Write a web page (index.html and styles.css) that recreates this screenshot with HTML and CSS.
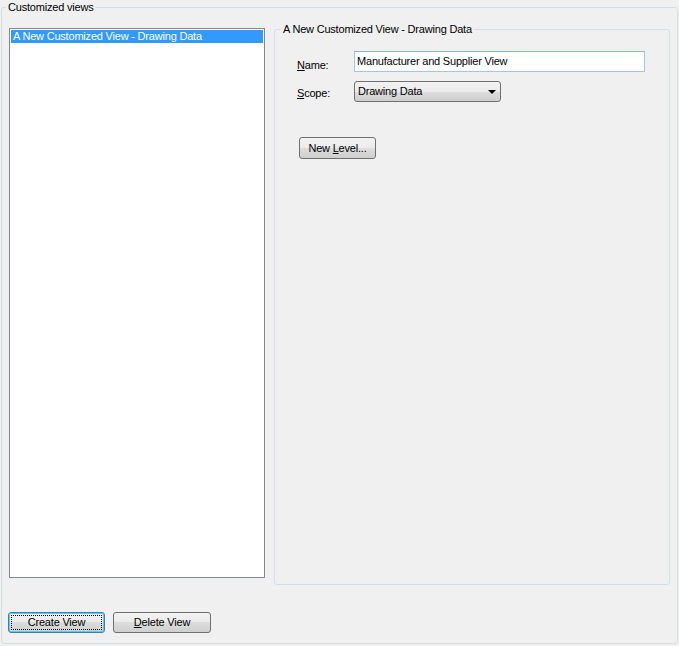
FILE: index.html
```html
<!DOCTYPE html>
<html>
<head>
<meta charset="utf-8">
<link rel="stylesheet" href="styles.css">
</head>
<body>
<fieldset class="outer">
  <legend class="outer-title">Customized views</legend>
  <div class="main">
    <div class="listbox">
      <div class="item selected">A New Customized View - Drawing Data</div>
    </div>
    <fieldset class="detail">
      <legend class="detail-title">A New Customized View - Drawing Data</legend>
      <div class="detail-body">
        <div class="field-row">
          <label class="field-label name-label"><span class="ak">N</span>ame:</label>
          <div class="textbox">Manufacturer and Supplier View</div>
        </div>
        <div class="field-row scope-row">
          <label class="field-label scope-label"><span class="ak">S</span>cope:</label>
          <div class="combo"><span class="combo-text">Drawing Data</span><span class="arrow"></span></div>
        </div>
        <button class="btn new-level">New <span class="ak">L</span>evel...</button>
      </div>
    </fieldset>
  </div>
  <div class="actions">
    <button class="btn create focused">Create View</button>
    <button class="btn delete"><span class="ak">D</span>elete View</button>
  </div>
</fieldset>
</body>
</html>
```

FILE: styles.css
```css
html, body {
  margin: 0;
  background: #f0f0f0;
}
body {
  width: 679px;
  height: 646px;
  overflow: hidden;
  font-family: "Liberation Sans", Arial, sans-serif;
  font-size: 11px;
  line-height: 13px;
  letter-spacing: -0.2px;
  color: #000;
}
.ak {
  text-decoration: underline;
}
.outer {
  margin: 0 0 0 1px;
  width: 677px;
  box-sizing: border-box;
  border: 1px solid #d5dfe5;
  border-radius: 3px;
  padding: 0;
  min-inline-size: 0;
}
.outer-title {
  margin-left: 4px;
  padding: 0 2px;
  line-height: 14px;
}
.main {
  display: flex;
  align-items: flex-start;
  gap: 9px;
  padding: 8px 7px 0 7px;
}
.listbox {
  width: 256px;
  height: 550px;
  box-sizing: border-box;
  margin-top: 6px;
  border: 1px solid #828790;
  background: #fff;
  padding: 1px;
}
.item {
  height: 13px;
  line-height: 13px;
  padding-left: 2px;
  white-space: nowrap;
}
.item.selected {
  background: #3399ff;
  color: #fff;
}
.detail {
  flex: 1;
  margin: 0;
  padding: 0;
  min-inline-size: 0;
  height: 563px;
  box-sizing: border-box;
  border: 1px solid #d5dfe5;
  border-radius: 3px;
}
.detail-title {
  margin-left: 6px;
  padding: 0 2px;
  line-height: 14px;
}
.detail-body {
  padding: 15px 24px 0 22px;
}
.field-row {
  display: flex;
  align-items: flex-start;
}
.field-label {
  width: 57px;
  flex: none;
}
.name-label {
  padding-top: 8px;
}
.scope-label {
  padding-top: 6px;
}
.textbox {
  flex: 1;
  height: 21px;
  box-sizing: border-box;
  border: 1px solid #a5c4e4;
  border-top-color: #8fb3dc;
  background: #fff;
  padding: 3px 0 0 2px;
  white-space: nowrap;
}
.scope-row {
  margin-top: 9px;
}
.combo {
  width: 147px;
  height: 21px;
  box-sizing: border-box;
  border: 1px solid #707070;
  border-radius: 3px;
  background: linear-gradient(#f2f2f2, #ebebeb 50%, #dddddd 50%, #cfcfcf);
  display: flex;
  align-items: center;
  justify-content: space-between;
  padding: 0 4px 0 3px;
}
.arrow {
  width: 0;
  height: 0;
  border-left: 4px solid transparent;
  border-right: 4px solid transparent;
  border-top: 4px solid #000;
}
.btn {
  font-family: inherit;
  font-size: 11px;
  line-height: 13px;
  letter-spacing: -0.2px;
  height: 21px;
  box-sizing: border-box;
  border: 1px solid #707070;
  border-radius: 3px;
  background: linear-gradient(#f2f2f2, #ebebeb 50%, #dddddd 50%, #cfcfcf);
  padding: 0;
  margin: 0;
  color: #000;
  position: relative;
}
.new-level {
  display: block;
  width: 77px;
  height: 22px;
  margin: 35px 0 0 2px;
}
.actions {
  display: flex;
  gap: 8px;
  padding: 27px 0 10px 6px;
}
.create {
  width: 97px;
}
.delete {
  width: 98px;
}
.btn.focused {
  border-color: #3c7fb1;
  box-shadow: inset 0 0 0 1px #5ccaf5;
}
.btn.focused::after {
  content: "";
  position: absolute;
  inset: 2px;
  border: 1px dotted #000;
}
```
